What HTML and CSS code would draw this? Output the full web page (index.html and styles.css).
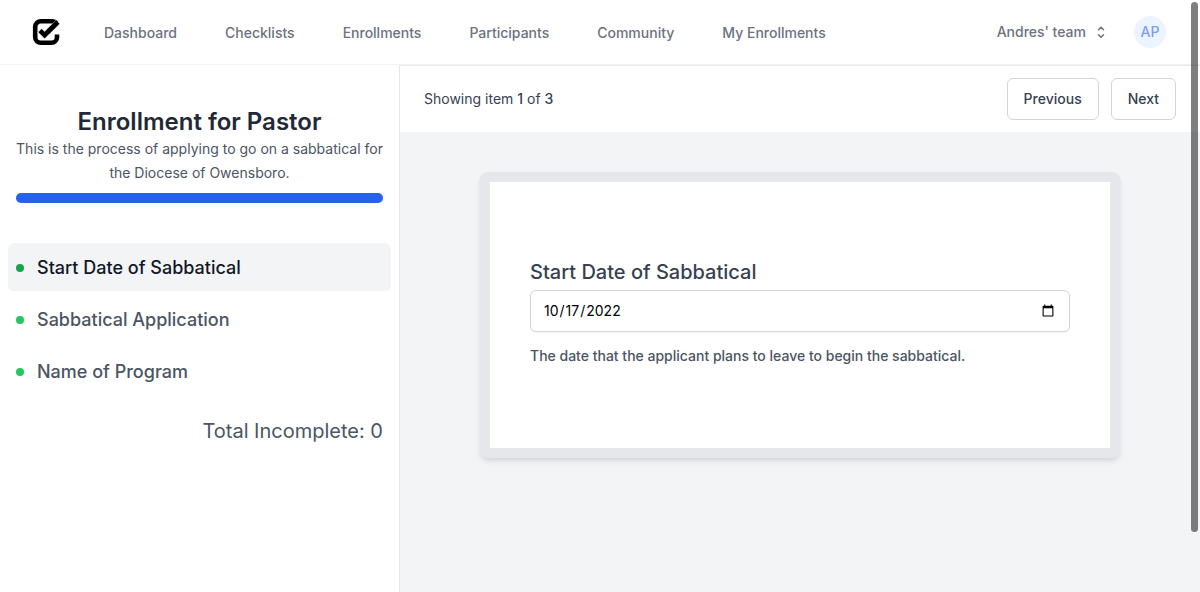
FILE: index.html
```html
<!DOCTYPE html>
<html lang="en-US">
<head>
<meta charset="utf-8">
<meta name="viewport" content="width=device-width, initial-scale=1">
<title>Enrollment for Pastor</title>
<link rel="stylesheet" href="styles.css">
</head>
<body>
<header class="topbar">
  <a class="logo" href="#" aria-label="Home">
    <svg viewBox="0 0 28 28" width="28" height="28" fill="none" stroke="#000">
      <path d="M25 16.600V19.200a5.600 5.600 0 0 1-5.600 5.600H8.800a5.600 5.600 0 0 1-5.600-5.600V8.800a5.600 5.600 0 0 1 5.600-5.600H20.400a5.600 5.600 0 0 1 4.200 1.900" stroke-width="4.600"/>
      <path d="M7.600 12.200l5 5L25.800 4" stroke="#aaa" stroke-width="5.400"/>
      <path d="M7.400 12.600l5.200 5.200L16 14.400" stroke="#fff" stroke-width="5.800"/>
      <path d="M8 12.600l4.600 4.600L25.800 4" stroke-width="4.600"/>
    </svg>
  </a>
  <nav class="nav" aria-label="Main">
    <a href="#">Dashboard</a>
    <a href="#">Checklists</a>
    <a href="#">Enrollments</a>
    <a href="#">Participants</a>
    <a href="#">Community</a>
    <a href="#">My Enrollments</a>
  </nav>
  <div class="account">
    <button class="team" type="button">Andres' team
      <svg viewBox="0 0 16 16" width="16" height="16" fill="none" stroke="currentColor" stroke-width="1.500" stroke-linecap="round" stroke-linejoin="round" aria-hidden="true"><path d="M4.500 5.700L7 3.200l2.500 2.500M4.500 10.700l2.500 2.500 2.500-2.500"/></svg>
    </button>
    <button class="avatar" type="button">AP</button>
  </div>
</header>
<div class="layout">
  <aside class="sidebar">
    <div class="summary">
      <h1>Enrollment for Pastor</h1>
      <p>This is the process of applying to go on a sabbatical for the Diocese of Owensboro.</p>
      <div class="progress" role="progressbar" aria-label="Progress" aria-valuenow="100" aria-valuemin="0" aria-valuemax="100"><div class="progress-fill" style="width: 100%"></div></div>
    </div>
    <nav class="steps" aria-label="Items">
      <a class="step current" href="#" aria-current="step">Start Date of Sabbatical</a>
      <a class="step" href="#">Sabbatical Application</a>
      <a class="step" href="#">Name of Program</a>
    </nav>
    <p class="total">Total Incomplete: 0</p>
  </aside>
  <main class="main">
    <div class="toolbar">
      <p>Showing item <b>1</b> of <b>3</b></p>
      <div class="pager">
        <button type="button">Previous</button>
        <button type="button">Next</button>
      </div>
    </div>
    <section class="stage">
      <form class="card">
        <label for="start-date">Start Date of Sabbatical</label>
        <input id="start-date" type="date" value="2022-10-17" aria-describedby="start-help">
        <p id="start-help">The date that the applicant plans to leave to begin the sabbatical.</p>
      </form>
    </section>
  </main>
</div>
<div class="scroll-thumb" aria-hidden="true"></div>
</body>
</html>
```
FILE: styles.css
```css
* { box-sizing: border-box; margin: 0; }

body {
  min-height: 100vh;
  display: flex;
  flex-direction: column;
  font: 400 14px/20px Inter, sans-serif;
  color: #374151;
  background: #fff;
}

a { color: inherit; text-decoration: none; }
button { font: inherit; cursor: pointer; }

.topbar {
  display: flex;
  align-items: center;
  min-height: 65px;
  padding: 0 34px 0 32px;
  border-bottom: 1px solid #f3f4f6;
  font-weight: 500;
  color: #6b7280;
}
.logo { display: flex; margin-right: 44px; }
.nav { display: flex; gap: 48px; padding-top: 2px; }
.account { display: flex; align-items: center; gap: 24px; margin-left: auto; }
.team {
  display: flex;
  align-items: center;
  gap: 8px;
  padding: 0;
  border: 0;
  background: none;
  color: inherit;
}
.avatar {
  width: 32px;
  height: 32px;
  padding: 0;
  border: 0;
  border-radius: 50%;
  background: #ebf4ff;
  color: #7f9cf5;
}

.layout { flex: 1; display: grid; grid-template-columns: 1fr 2fr; }

.sidebar { padding: 42px 8px 40px; border-right: 1px solid #e5e7eb; }
.summary { padding: 0 8px; text-align: center; color: #4b5563; line-height: 24px; }
.summary h1 { font-size: 24px; line-height: 30px; font-weight: 600; color: #1f2937; }
.progress { height: 10px; margin-top: 8px; border-radius: 5px; background: #e5e7eb; }
.progress-fill { height: 100%; border-radius: 5px; background: #2563eb; }

.steps { display: grid; gap: 4px; margin-top: 40px; }
.step {
  display: flex;
  align-items: center;
  gap: 13px;
  padding: 11px 8px 9px;
  border-radius: 6px;
  font-size: 18px;
  line-height: 28px;
  font-weight: 500;
  color: #4b5563;
}
.step::before { content: ""; width: 8px; height: 8px; border-radius: 50%; background: #22c55e; }
.step.current { background: #f3f4f6; color: #111827; }
.step.current::before { background: #16a34a; }
.total { margin-top: 22px; padding: 0 8px; text-align: right; font-size: 20px; line-height: 28px; color: #4b5563; }

.main { display: flex; flex-direction: column; background: #f3f4f6; }
.toolbar {
  display: flex;
  align-items: center;
  justify-content: space-between;
  padding: 12px 24px;
  border-top: 1px solid #e5e7eb;
  background: #fff;
}
.toolbar b { font-weight: 500; }
.pager { display: flex; gap: 12px; }
.pager button {
  padding: 10px 16px;
  border: 1px solid #d1d5db;
  border-radius: 6px;
  background: #fff;
  font-weight: 500;
  color: #374151;
}

.stage { padding: 40px 80px; }
.card {
  max-width: 640px;
  margin: 0 auto;
  padding: 76px 40px 82px;
  border: 10px solid #e5e7eb;
  border-radius: 8px;
  background: #fff;
  box-shadow: 0 4px 6px -1px rgba(0, 0, 0, .1), 0 2px 4px -1px rgba(0, 0, 0, .06);
  font-weight: 500;
  color: #4b5563;
}
.card label { display: block; font-size: 20px; line-height: 28px; color: #374151; }
.card input {
  width: 100%;
  height: 42px;
  margin: 4px 0 14px;
  padding: 8px 12px;
  border: 1px solid #d1d5db;
  border-radius: 6px;
  background: #fff;
  font: 400 14px/20px Inter, sans-serif;
  color: #000;
  box-shadow: 0 1px 2px rgba(0, 0, 0, .05);
  display: block;
}

.scroll-thumb {
  position: fixed;
  top: 2px;
  right: 2px;
  width: 7px;
  height: calc(90vh - 3px);
  border-radius: 4px;
  background: rgba(0, 0, 0, .5);
}
```
